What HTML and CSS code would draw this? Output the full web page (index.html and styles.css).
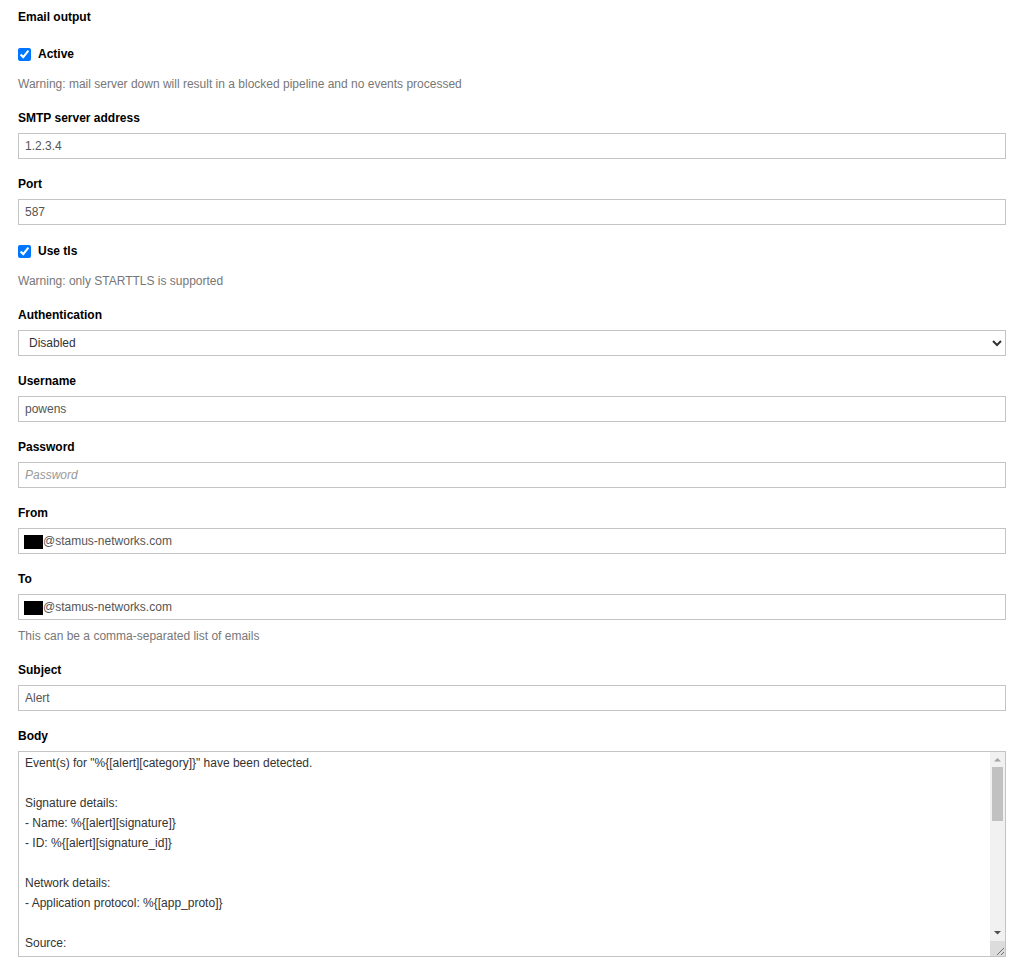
FILE: index.html
```html
<!DOCTYPE html>
<html lang="en">
<head>
<meta charset="UTF-8">
<title>Email output</title>
<link rel="stylesheet" href="styles.css">
</head>
<body>

<div class="title">Email output</div>

<div class="group check-group">
  <label class="check"><input type="checkbox" checked> Active</label>
  <p class="help">Warning: mail server down will result in a blocked pipeline and no events processed</p>
</div>

<div class="group">
  <label class="lbl">SMTP server address</label>
  <input class="ctl" type="text" value="1.2.3.4">
</div>

<div class="group">
  <label class="lbl">Port</label>
  <input class="ctl" type="text" value="587">
</div>

<div class="group check-group">
  <label class="check"><input type="checkbox" checked> Use tls</label>
  <p class="help">Warning: only STARTTLS is supported</p>
</div>

<div class="group">
  <label class="lbl">Authentication</label>
  <select class="ctl">
    <option>Disabled</option>
    <option>Plain</option>
    <option>Login</option>
  </select>
</div>

<div class="group">
  <label class="lbl">Username</label>
  <input class="ctl" type="text" value="powens">
</div>

<div class="group">
  <label class="lbl">Password</label>
  <input class="ctl" type="password" placeholder="Password">
</div>

<div class="group">
  <label class="lbl">From</label>
  <div class="ctl fake"><span class="redact"></span>@stamus-networks.com</div>
</div>

<div class="group">
  <label class="lbl">To</label>
  <div class="ctl fake"><span class="redact"></span>@stamus-networks.com</div>
  <p class="help help-under">This can be a comma-separated list of emails</p>
</div>

<div class="group">
  <label class="lbl">Subject</label>
  <input class="ctl" type="text" value="Alert">
</div>

<div class="group last">
  <label class="lbl">Body</label>
  <div class="area-wrap">
    <textarea class="ctl body-area">Event(s) for "%{[alert][category]}" have been detected.

Signature details:
- Name: %{[alert][signature]}
- ID: %{[alert][signature_id]}

Network details:
- Application protocol: %{[app_proto]}

Source:
- IP: %{[src_ip]}
- Port: %{[src_port]}

Destination:
- IP: %{[dest_ip]}
- Port: %{[dest_port]}

Flow:
- Protocol: %{[proto]}

Host details:
- Probe: %{[host]}
- Interface: %{[in_iface]}
- Timestamp: %{[timestamp]}

Payload:
%{[payload_printable]}

--
Stamus Networks alerting</textarea>
    <div class="vscroll" aria-hidden="true">
      <div class="sb-btn"><svg width="15" height="15"><polygon points="4,9.5 7.5,6 11,9.5" fill="#a3a3a3"/></svg></div>
      <div class="sb-track"><div class="sb-thumb"></div></div>
      <div class="sb-btn"><svg width="15" height="15"><polygon points="4,5 11,5 7.5,8.5" fill="#505050"/></svg></div>
      <div class="sb-corner"><svg width="15" height="15"><path d="M7 14L14 7M11 14L14 11" stroke="#6f6f6f" stroke-width="1" fill="none"/></svg></div>
    </div>
  </div>
</div>

</body>
</html>
```

FILE: styles.css
```css
html,body{margin:0;background:#fff}
body{padding:9px 19px 0 18px;font-family:"Liberation Sans",Arial,sans-serif;font-size:12px;color:#000}

.title{font-weight:bold;line-height:17px;margin-bottom:17px}

.group{margin-bottom:15px}
.group.last{margin-bottom:0}

.lbl{display:block;font-weight:bold;line-height:17px;padding-top:2px;margin-bottom:6px}

.check{display:flex;align-items:center;gap:7px;font-weight:bold;line-height:17px;padding-top:3px}
.check input{margin:0;width:13px;height:13px}

.help{margin:13px 0 3px;line-height:17px;color:#777}
.help.help-under{margin-top:8px}

.ctl{display:block;box-sizing:border-box;width:100%;height:26px;margin:0;padding:0 6px;border:1px solid #c4c4c4;background:#fff;color:#555;font-family:"Liberation Sans",Arial,sans-serif;font-size:12px;border-radius:0;outline:none}
.ctl::placeholder{color:#999;font-style:italic}
select.ctl{color:#333}

.fake{display:flex;align-items:center}
.redact{display:inline-block;width:19px;height:14px;background:#000;margin:2px 0 0 -1px}

.area-wrap{position:relative}
.body-area{height:206px;padding:1px 22px 1px 6px;line-height:20px;color:#333;resize:none;overflow-y:auto;scrollbar-width:none}
.body-area::-webkit-scrollbar{display:none}

/* drawn scrollbar on top of the textarea */
.vscroll{position:absolute;top:1px;right:1px;bottom:1px;width:15px;display:flex;flex-direction:column;background:#f1f1f1}
.sb-btn{height:15px;flex:none}
.sb-btn svg,.sb-corner svg{display:block}
.sb-track{flex:1}
.sb-thumb{height:54px;margin:0 2px;background:#c1c1c1}
.sb-corner{height:15px;flex:none;background:#dcdcdc}
```
